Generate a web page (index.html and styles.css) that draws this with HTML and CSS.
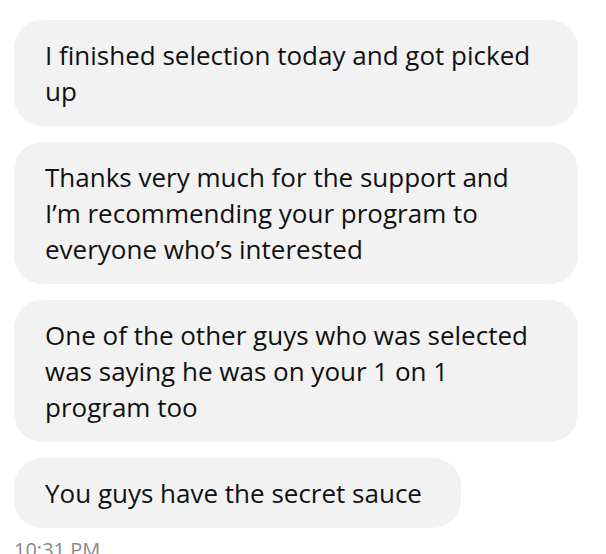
FILE: index.html
```html
<!DOCTYPE html>
<html lang="en">
<head>
    <meta charset="UTF-8">
    <meta name="viewport" content="width=device-width, initial-scale=1.0">
    <title>Messages</title>
    <link rel="stylesheet" href="styles.css">
</head>
<body>
    <div class="thread">
        <div class="bubble">I finished selection today and got picked up</div>
        <div class="bubble">Thanks very much for the support and I’m recommending your program to everyone who’s interested</div>
        <div class="bubble">One of the other guys who was selected was saying he was on your 1 on 1 program too</div>
        <div class="bubble">You guys have the secret sauce</div>
        <div class="time">10:31 PM</div>
    </div>
</body>
</html>
```

FILE: styles.css
```css
body {
    font-family: 'Open Sans', sans-serif;
    background: #fff;
    color: #111;
    margin: 0;
    padding: 0;
}

.thread {
    display: flex;
    flex-direction: column;
    align-items: flex-start;
    gap: 16px;
    padding: 20px 28px 0 14px;
}

.bubble {
    box-sizing: border-box;
    max-width: 564px;
    padding: 17px 39px 17px 31px;
    background-color: #f2f2f2;
    border-radius: 28px;
    font-size: 26px;
    line-height: 36px;
}

.time {
    font-size: 20px;
    color: #8a8a8a;
    margin-top: -8px;
}
```
